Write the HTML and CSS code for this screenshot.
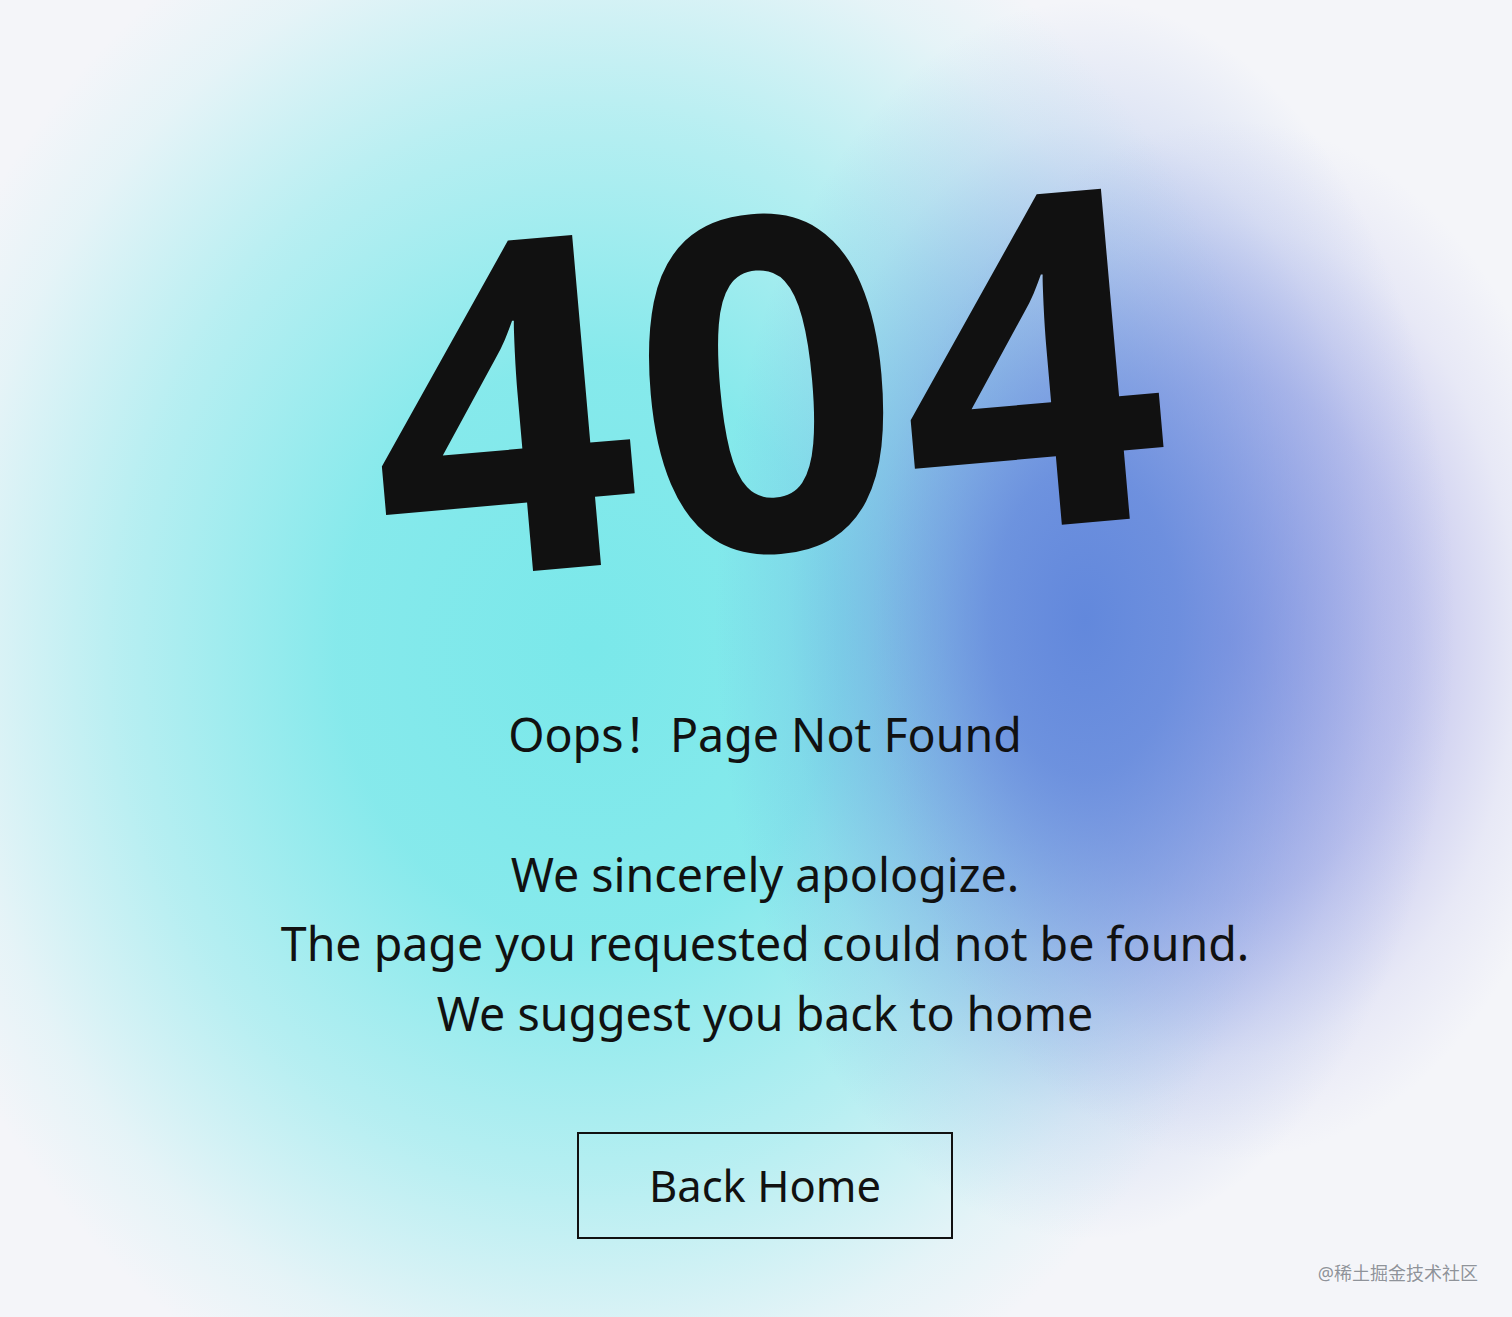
FILE: index.html
```html
<!DOCTYPE html>
<html lang="en">
<head>
    <meta charset="UTF-8">
    <meta name="viewport" content="width=device-width, initial-scale=1.0">
    <title>404 - Page Not Found</title>
    <link rel="stylesheet" href="styles.css">
</head>
<body>
    <main class="page">
        <h1 class="code">404</h1>
        <p class="message">
            Oops！Page Not Found<br>
            <br>
            We sincerely apologize.<br>
            The page you requested could not be found.<br>
            We suggest you back to home
        </p>
        <a class="home-btn" href="#">Back Home</a>
    </main>
    <div class="watermark">@稀土掘金技术社区</div>
</body>
</html>
```
FILE: styles.css
```css
html, body {
    margin: 0;
    height: 100%;
}
body {
    font-family: "Noto Sans", "Noto Sans CJK SC", sans-serif;
    color: #111;
    background-color: #f4f5f9;
    background-image:
        radial-gradient(ellipse 370px 620px at 1085px 620px, rgba(98, 136, 220, 1) 0%, rgba(98, 136, 220, 0.85) 25%, rgba(98, 136, 220, 0.45) 55%, rgba(98, 136, 220, 0.15) 80%, rgba(98, 136, 220, 0) 100%),
        radial-gradient(ellipse 360px 520px at 1230px 640px, rgba(160, 162, 230, 0.9) 0%, rgba(160, 162, 230, 0.55) 50%, rgba(160, 162, 230, 0.15) 80%, rgba(160, 162, 230, 0) 100%),
        radial-gradient(ellipse 720px 820px at 590px 650px, rgba(122, 232, 234, 1) 0%, rgba(122, 232, 234, 0.9) 35%, rgba(122, 232, 234, 0.5) 65%, rgba(122, 232, 234, 0.12) 88%, rgba(122, 232, 234, 0) 100%);
    background-repeat: no-repeat;
    overflow: hidden;
    position: relative;
}
.page {
    display: flex;
    flex-direction: column;
    align-items: center;
    padding: 138px 0 0 18px;
}
.code {
    margin: 0;
    font-size: 464px;
    font-weight: 700;
    line-height: 1;
    transform: rotate(-5deg);
}
.message {
    margin: 98px 0 0;
    font-size: 46.5px;
    line-height: 1.5;
    text-align: center;
}
.home-btn {
    margin-top: 83px;
    padding: 19px 70px 19px;
    border: 2px solid #111;
    font-size: 43.5px;
    line-height: 65px;
    color: #111;
    text-decoration: none;
}
.watermark {
    position: absolute;
    right: 34px;
    bottom: 32px;
    font-size: 18px;
    color: #8f939a;
    text-shadow: 0 0 2px #fff;
}
```
